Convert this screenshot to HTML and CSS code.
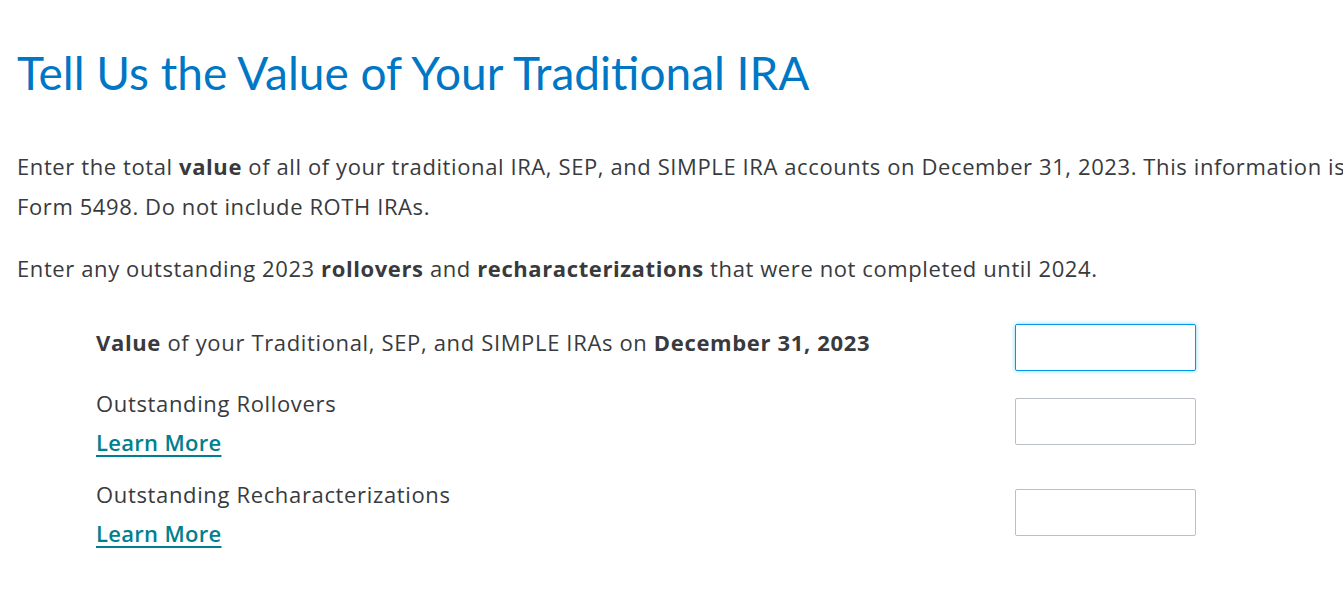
FILE: index.html
```html
<!DOCTYPE html>
<html lang="en">
<head>
    <meta charset="UTF-8">
    <title>Traditional IRA Value</title>
    <link rel="stylesheet" href="styles.css">
</head>
<body>
    <h1 class="page-title">Tell Us the Value of Your Traditional IRA</h1>

    <p class="intro">Enter the total <b>value</b> of all of your traditional IRA, SEP, and SIMPLE IRA accounts on December 31, 2023. This information is found on Form 5498. Do not include ROTH IRAs.</p>

    <p class="intro">Enter any outstanding 2023 <b>rollovers</b> and <b>recharacterizations</b> that were not completed until 2024.</p>

    <div class="fields">
        <div class="field-row">
            <div class="field-label">
                <span><b>Value</b> of your Traditional, SEP, and SIMPLE IRAs on <b>December 31, 2023</b></span>
            </div>
            <input type="text" class="field-input focused" autofocus>
        </div>
        <div class="field-row">
            <div class="field-label">
                <span>Outstanding Rollovers</span>
                <a href="#" class="learn-more">Learn More</a>
            </div>
            <input type="text" class="field-input">
        </div>
        <div class="field-row">
            <div class="field-label">
                <span>Outstanding Recharacterizations</span>
                <a href="#" class="learn-more">Learn More</a>
            </div>
            <input type="text" class="field-input">
        </div>
    </div>
</body>
</html>
```

FILE: styles.css
```css
body {
    font-family: "Open Sans", Lato, sans-serif;
    color: #393a3d;
    margin: 0;
    padding: 0 0 0 17px;
    width: 1600px;
    overflow: hidden;
}
.page-title {
    font-family: Lato, sans-serif;
    color: #0077c5;
    font-weight: 400;
    font-size: 46px;
    line-height: 56px;
    margin: 45px 0 0 0;
}
.intro {
    font-size: 22px;
    line-height: 40px;
    letter-spacing: 0.6px;
    margin: 45px 0 0 0;
    width: 1465px;
}
.intro + .intro {
    margin-top: 22px;
}
.intro b, .field-label b {
    font-weight: 700;
}
.fields {
    margin: 35px 0 0 79px;
    width: 1100px;
}
.field-row {
    display: flex;
    align-items: flex-start;
    margin-bottom: 13px;
}
.field-label {
    flex: 0 0 919px;
    display: flex;
    flex-direction: column;
    font-size: 22px;
    line-height: 39px;
    letter-spacing: 0.65px;
}
.learn-more {
    color: #00808f;
    font-weight: 600;
    letter-spacing: 0.3px;
    text-decoration: underline;
    text-decoration-thickness: 2px;
    text-underline-offset: 4px;
}
.field-input {
    width: 181px;
    height: 47px;
    margin-top: 14px;
    box-sizing: border-box;
    border: 1px solid #babec5;
    border-radius: 2px;
    font-size: 20px;
    padding: 0 10px;
    outline: none;
}
.field-input.focused {
    margin-top: 1px;
    border-color: #0097e6;
    box-shadow: 0 0 4px #7fd3ff;
}
```
